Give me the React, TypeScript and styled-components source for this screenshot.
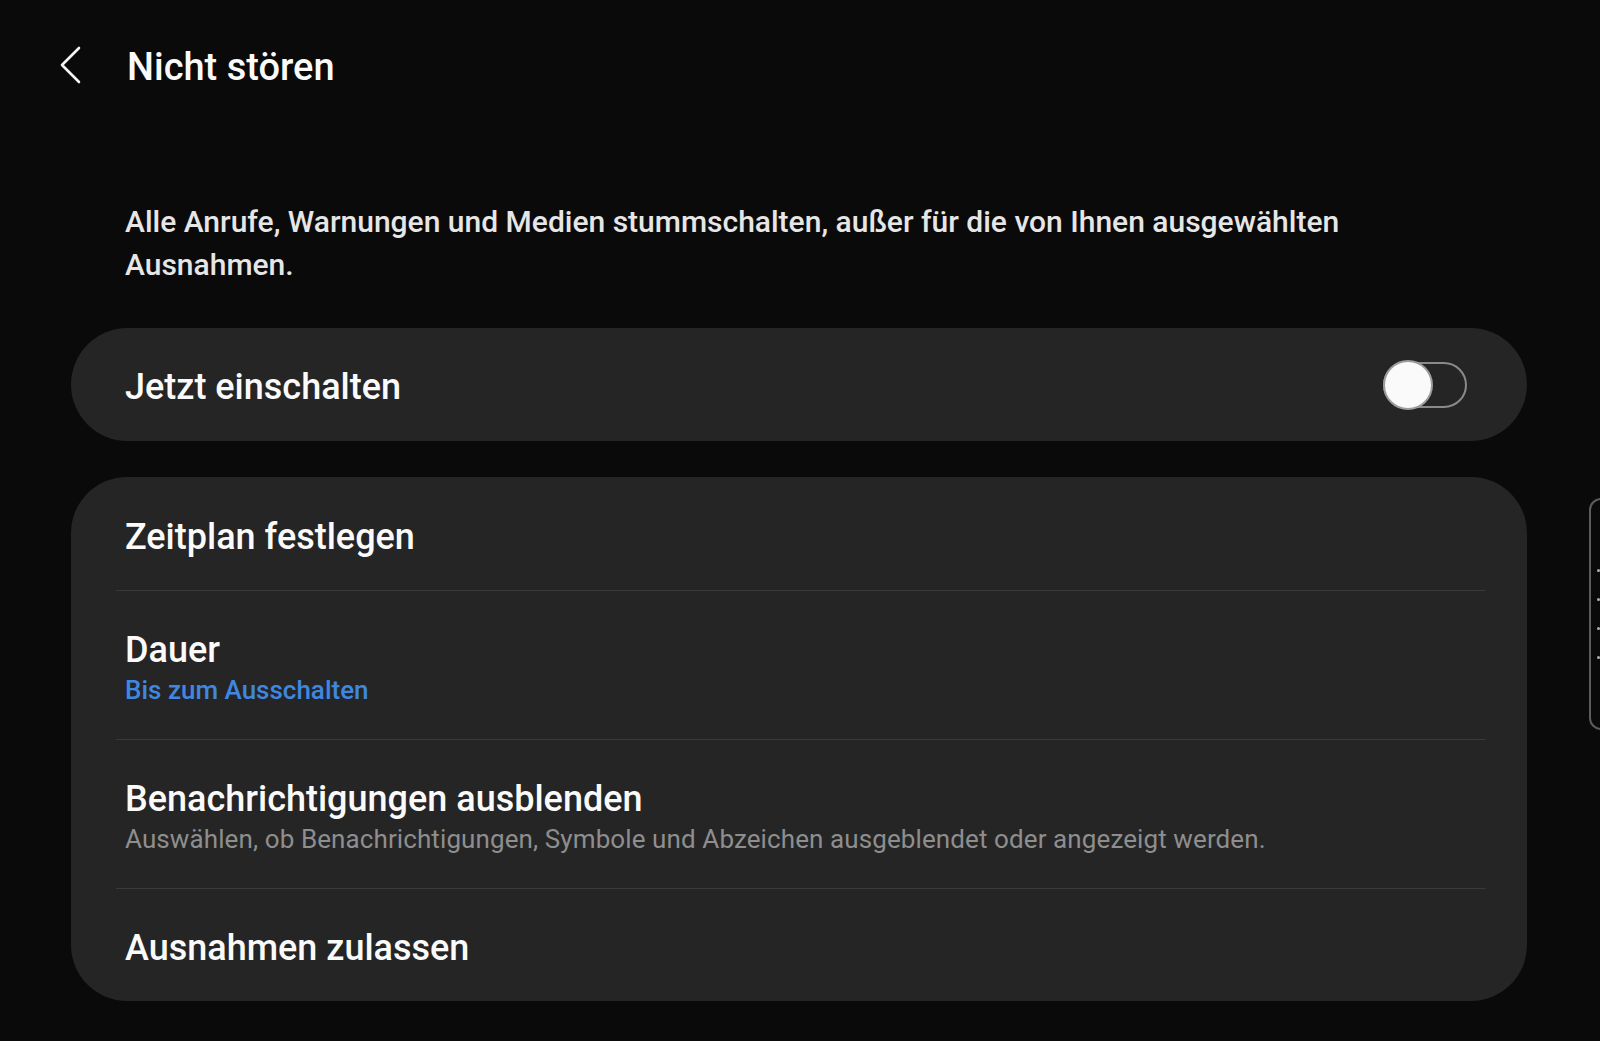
import React, { useState } from 'react'
import styled, { createGlobalStyle } from 'styled-components'

const GlobalStyle = createGlobalStyle`
  html, body {
    margin: 0;
    padding: 0;
    background: #0a0a0a;
  }

  body {
    font-family: Roboto, "Noto Sans", "Liberation Sans", sans-serif;
    -webkit-font-smoothing: antialiased;
  }
`

const App = () => {
  const [enabled, setEnabled] = useState(false)

  return (
    <>
      <GlobalStyle />
      <Page>
        <Header>
          <BackButton aria-label="Zurück">
            <svg width="24" height="38" viewBox="0 0 24 38" fill="none">
              <path
                d="M21 2 L4 19 L21 36"
                stroke="#f5f5f5"
                strokeWidth="2.6"
                strokeLinecap="round"
                strokeLinejoin="round"
              />
            </svg>
          </BackButton>
          <Title>Nicht stören</Title>
        </Header>

        <Description>
          Alle Anrufe, Warnungen und Medien stummschalten, außer für die von
          Ihnen ausgewählten Ausnahmen.
        </Description>

        <SwitchCard onClick={() => setEnabled(!enabled)}>
          <RowTitle>Jetzt einschalten</RowTitle>
          <Track $on={enabled}>
            <Thumb $on={enabled} />
          </Track>
        </SwitchCard>

        <ListCard>
          <Row $height={113}>
            <RowTitle>Zeitplan festlegen</RowTitle>
          </Row>
          <Divider />
          <Row $height={148}>
            <RowTitle>Dauer</RowTitle>
            <RowValue>Bis zum Ausschalten</RowValue>
          </Row>
          <Divider />
          <Row $height={148}>
            <RowTitle>Benachrichtigungen ausblenden</RowTitle>
            <RowSummary>
              Auswählen, ob Benachrichtigungen, Symbole und Abzeichen
              ausgeblendet oder angezeigt werden.
            </RowSummary>
          </Row>
          <Divider />
          <Row $height={112}>
            <RowTitle>Ausnahmen zulassen</RowTitle>
          </Row>
        </ListCard>

        <EdgeHandle>
          <HandleDot />
          <HandleDot />
          <HandleDot />
          <HandleDot />
        </EdgeHandle>
      </Page>
    </>
  )
}

const Page = styled.div`
  position: relative;
  width: 1600px;
  height: 1041px;
  overflow: hidden;
  background: #0a0a0a;
  color: #fafafa;
`

const Header = styled.div`
  display: flex;
  align-items: center;
  height: 44px;
  padding: 45px 0 0 58px;
`

const BackButton = styled.button`
  display: flex;
  align-items: center;
  border: 0;
  padding: 0;
  margin: 0 45px 0 0;
  background: none;
  cursor: pointer;
  position: relative;
  top: -2px;
`

const Title = styled.h1`
  margin: 0;
  font-size: 38px;
  line-height: 44px;
  font-weight: 500;
  color: #fafafa;
`

const Description = styled.p`
  margin: 111px 0 0 125px;
  max-width: 1300px;
  font-size: 30px;
  line-height: 43px;
  font-weight: 500;
  color: #e6e6e6;
`

const SwitchCard = styled.div`
  display: flex;
  align-items: center;
  justify-content: space-between;
  box-sizing: border-box;
  height: 113px;
  margin: 42px 73px 0 71px;
  padding: 5px 60px 0 54px;
  border-radius: 57px;
  background: #252525;
  cursor: pointer;
`

const Track = styled.div<{ $on: boolean }>`
  position: relative;
  box-sizing: border-box;
  width: 84px;
  height: 46px;
  border-radius: 23px;
  border: 2px solid ${(p) => (p.$on ? '#3f87e0' : '#8a8a8a')};
  background: ${(p) => (p.$on ? '#3f87e0' : 'transparent')};
  margin-top: -5px;
`

const Thumb = styled.div<{ $on: boolean }>`
  position: absolute;
  top: -4px;
  left: ${(p) => (p.$on ? '32px' : '-2px')};
  box-sizing: border-box;
  width: 50px;
  height: 50px;
  border-radius: 50%;
  background: #fafafa;
  border: 2px solid #9c9c9c;
`

const ListCard = styled.div`
  margin: 36px 73px 0 71px;
  border-radius: 56px;
  background: #252525;
  overflow: hidden;
`

const Row = styled.div<{ $height: number }>`
  display: flex;
  flex-direction: column;
  justify-content: center;
  box-sizing: border-box;
  height: ${(p) => p.$height}px;
  padding: 6px 54px 0;
  cursor: pointer;
`

const RowTitle = styled.div`
  font-size: 36px;
  line-height: 44px;
  font-weight: 500;
  color: #fafafa;
`

const RowValue = styled.div`
  font-size: 26px;
  line-height: 36px;
  font-weight: 500;
  color: #3f87e0;
`

const RowSummary = styled.div`
  font-size: 26px;
  line-height: 36px;
  font-weight: 400;
  letter-spacing: 0.1px;
  color: #8e8e8e;
`

const Divider = styled.div`
  height: 1px;
  margin: 0 42px 0 45px;
  background: #3a3a3a;
`

const EdgeHandle = styled.div`
  position: absolute;
  left: 1589px;
  top: 498px;
  box-sizing: border-box;
  width: 24px;
  height: 232px;
  border: 2px solid #5c5c5c;
  border-radius: 12px;
  display: flex;
  flex-direction: column;
  align-items: flex-start;
  justify-content: center;
  gap: 26px;
  padding-left: 6px;
`

const HandleDot = styled.span`
  width: 3px;
  height: 3px;
  border-radius: 50%;
  background: #b0b0b0;
`

export default App
